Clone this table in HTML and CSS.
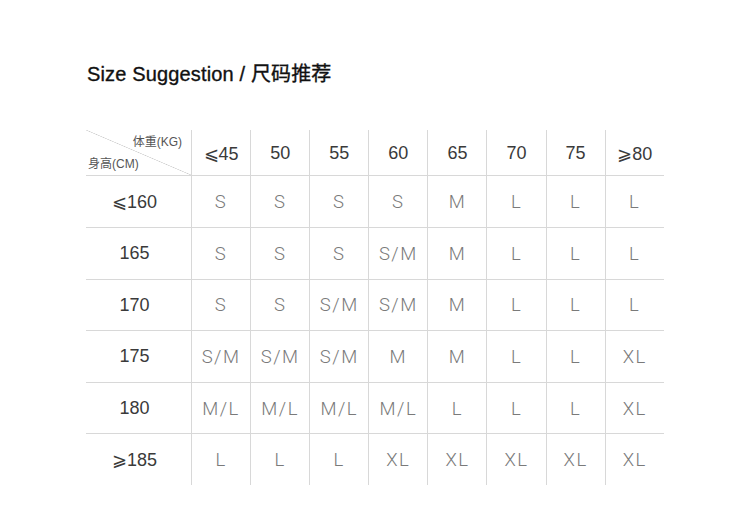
FILE: index.html
```html
<!DOCTYPE html>
<html lang="zh">
<head>
<meta charset="utf-8">
<title>Size Suggestion</title>
<link rel="stylesheet" href="styles.css">
</head>
<body>
<main class="page">
  <h1 class="title">Size Suggestion / 尺码推荐</h1>
  <div class="chart">
    <div class="corner"><span class="corner-top">体重(KG)</span><span class="corner-bottom">身高(CM)</span></div>
    <div class="head">⩽45</div><div class="head">50</div><div class="head">55</div><div class="head">60</div><div class="head">65</div><div class="head">70</div><div class="head">75</div><div class="head">⩾80</div>

    <div class="label">⩽160</div>
    <div class="size">S</div><div class="size">S</div><div class="size">S</div><div class="size">S</div><div class="size">M</div><div class="size">L</div><div class="size">L</div><div class="size">L</div>

    <div class="label">165</div>
    <div class="size">S</div><div class="size">S</div><div class="size">S</div><div class="size">S/M</div><div class="size">M</div><div class="size">L</div><div class="size">L</div><div class="size">L</div>

    <div class="label">170</div>
    <div class="size">S</div><div class="size">S</div><div class="size">S/M</div><div class="size">S/M</div><div class="size">M</div><div class="size">L</div><div class="size">L</div><div class="size">L</div>

    <div class="label">175</div>
    <div class="size">S/M</div><div class="size">S/M</div><div class="size">S/M</div><div class="size">M</div><div class="size">M</div><div class="size">L</div><div class="size">L</div><div class="size">XL</div>

    <div class="label">180</div>
    <div class="size">M/L</div><div class="size">M/L</div><div class="size">M/L</div><div class="size">M/L</div><div class="size">L</div><div class="size">L</div><div class="size">L</div><div class="size">XL</div>

    <div class="label">⩾185</div>
    <div class="size">L</div><div class="size">L</div><div class="size">L</div><div class="size">XL</div><div class="size">XL</div><div class="size">XL</div><div class="size">XL</div><div class="size">XL</div>
  </div>
</main>
</body>
</html>
```

FILE: styles.css
```css
html, body {
  margin: 0;
  padding: 0;
  background: #ffffff;
}

.page {
  padding: 63px 0 0 86px;
  font-family: "Liberation Sans", Arial, "Noto Sans CJK SC", sans-serif;
}

.title {
  margin: 0 0 44px 1px;
  font-size: 20px;
  line-height: 23px;
  font-weight: normal;
  color: #111111;
  letter-spacing: 0.15px;
  -webkit-text-stroke: 0.35px #111111;
}

.chart {
  display: grid;
  grid-template-columns: 105px repeat(8, 58.1px);
  grid-template-rows: 45.4px repeat(6, 50.6px);
  gap: 1px;
  background: #d8d8d8;
  width: max-content;
}

.chart > div {
  background: #ffffff;
  display: flex;
  align-items: center;
  justify-content: center;
}

.chart > .corner {
  display: flex;
  flex-direction: column;
  align-items: stretch;
  justify-content: flex-start;
  padding: 5px 9px 0 2px;
  font-size: 12px;
  line-height: 14px;
  color: #555555;
  background: linear-gradient(to top right, #ffffff calc(50% - 0.6px), #cfcfcf 50%, #ffffff calc(50% + 0.6px));
}

.corner-top {
  text-align: right;
}

.corner-bottom {
  text-align: left;
  margin-top: 8px;
}

.head {
  font-size: 18px;
  color: #3a3a3a;
  padding-top: 2px;
}

.chart > .label {
  font-size: 18px;
  color: #3a3a3a;
  padding: 1px 8px 0 0;
}

.size {
  font-family: Roboto, "Liberation Sans", sans-serif;
  font-weight: 300;
  font-size: 18.5px;
  color: #7a7a7a;
  letter-spacing: 1.5px;
  padding-top: 1px;
}
```
